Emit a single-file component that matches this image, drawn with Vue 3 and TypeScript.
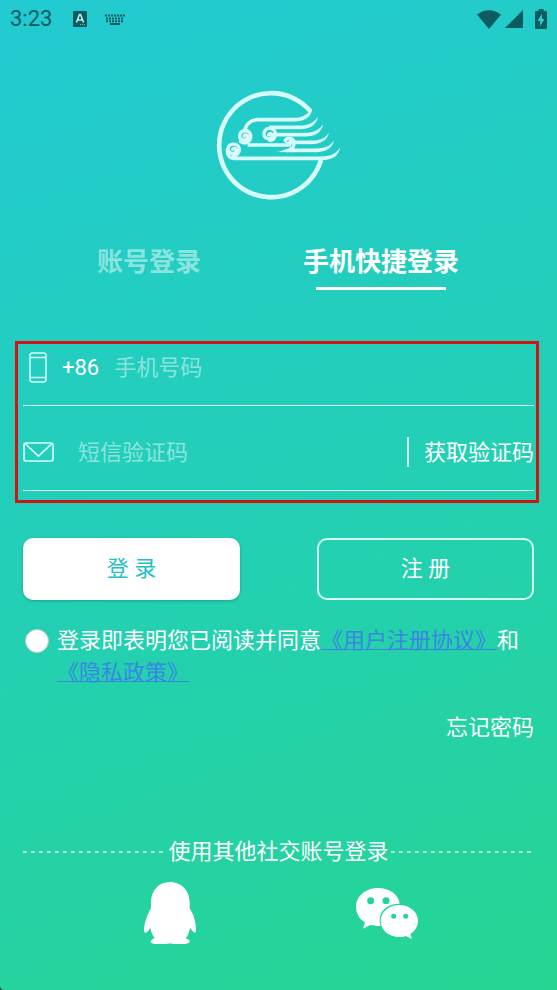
<script setup lang="ts">
import { ref } from 'vue'

type LoginMode = 'account' | 'phone'

const mode = ref<LoginMode>('phone')
const tabs: { id: LoginMode; label: string }[] = [
  { id: 'account', label: '账号登录' },
  { id: 'phone', label: '手机快捷登录' },
]
const phone = ref('')
const code = ref('')
const agreed = ref(false)
</script>

<template>
  <div class="screen">
    <header class="status">
      <div class="status-group">
        <time class="clock">3:23</time>
        <svg class="badge-a" width="14" height="16" viewBox="0 0 14 16" aria-hidden="true">
          <rect width="14" height="16" rx="1" fill="currentColor" />
          <path d="M3.5 11.5 6.4 3.5h1.2l2.9 8M4.6 9h4.8" fill="none" stroke="#b9eff2" stroke-width="1.6" />
          <path d="M7 13.7h5" stroke="#7fdde0" stroke-width="1" stroke-dasharray="1 1" />
        </svg>
        <svg width="20" height="11" viewBox="0 0 20 11" aria-hidden="true">
          <g stroke="currentColor" stroke-width="2">
            <path d="M0 1.5h20" stroke-dasharray="2 1" />
            <path d="M1 4.5h18" stroke-dasharray="2 1" />
            <path d="M1 7.2h18" stroke-dasharray="2 1" />
            <path d="M5 10h10" />
          </g>
        </svg>
      </div>
      <div class="status-group status-right">
        <svg width="24" height="19" viewBox="0 0 24 19" aria-hidden="true">
          <path d="M0 4.5Q12-4 24 4.5L12 19Z" fill="currentColor" />
        </svg>
        <svg width="18" height="18" viewBox="0 0 18 18" aria-hidden="true">
          <path d="M18 0v18H0Z" fill="currentColor" />
        </svg>
        <svg class="battery" width="12" height="20" viewBox="0 0 12 20" aria-hidden="true">
          <path d="M3.5 0h5v2H11q1 0 1 1v16q0 1-1 1H1q-1 0-1-1V3q0-1 1-1h2.500Z" fill="currentColor" />
          <path d="M7 5 2.500 11.800h2.700V17L9.500 10H7Z" fill="#35cfcf" />
        </svg>
      </div>
    </header>

    <main class="content">
      <svg class="logo" width="147" height="130" viewBox="0 0 441 390" role="img" aria-label="Logo">
        <path d="M316 96A156 156 0 1 0 348 243" fill="none" stroke="currentColor" stroke-width="14" />
        <g fill="none" stroke="currentColor" stroke-width="11">
          <path d="M119 158C121 138 135 123 158 122H270" />
          <path d="M192 145H282" />
          <path d="M205 167H300" />
          <path d="M268 190H317" />
          <path d="M256 214H332" />
          <path d="M86 238H351" />
          <path d="M128 198H258" />
        </g>
        <g fill="none" stroke="currentColor" stroke-width="10" stroke-linecap="round">
          <path d="M117 171C121 164 130 169 127 177C122 188 103 184 104 170C106 151 133 150 137 169C139 187 122 198 106 187" />
          <path d="M191 168C194 160 204 164 201 173C195 185 176 179 177 164C179 144 206 142 211 162C213 175 205 185 194 184" />
          <path d="M83 211C88 204 97 211 92 219C84 229 68 220 69 208C72 192 97 191 103 208C105 221 95 230 84 231" />
          <path d="M86 238C73 238 66 227 67 212" />
          <path d="M254 191C251 185 258 184 259 190C260 199 247 197 244 189" stroke-width="7" />
          <path d="M240 184C247 175 265 175 267 189C269 203 260 211 248 215" />
        </g>
        <g fill="currentColor">
          <path d="M268 116.500C288 116 300 110 312 98V90L321 94C317 116 296 128 268 127.500Z" />
          <path d="M280 139.500C310 140 328 131 339 113C333 139 315 151 280 150.500Z" />
          <path d="M298 161.500C326 162 344 153 355 135C349 161 331 173 298 172.500Z" />
          <path d="M315 184.500C343 185 361 178 372 161C366 184 348 196 315 195.500Z" />
          <path d="M330 208.500C358 209 376 202 387 184C382 208 363 220 330 219.500Z" />
          <path d="M349 232.500C376 233 394 224 406 205C400 232 382 244 349 243.500Z" />
          <path d="M216 219C231 217 240 211 251 208.500H270V219.500Z" />
        </g>
      </svg>

      <nav class="tabs">
        <button
          v-for="tab in tabs"
          :key="tab.id"
          type="button"
          class="tab"
          :class="{ active: mode === tab.id }"
          @click="mode = tab.id"
        >
          {{ tab.label }}
        </button>
      </nav>

      <form @submit.prevent>
        <div class="fields">
          <div class="field field-phone">
            <label class="phone-icon" for="phone" aria-label="手机号码">
              <svg width="18" height="31" viewBox="0 0 18 31" fill="none" stroke="currentColor" stroke-width="1.5">
                <rect x="1" y="1" width="16" height="29" rx="2.500" />
                <path d="M1 5.500h16M1 25.500h16" />
              </svg>
            </label>
            <span class="prefix">+86</span>
            <input id="phone" v-model="phone" type="tel" placeholder="手机号码" />
          </div>
          <div class="field field-code">
            <label class="mail-icon" for="code" aria-label="短信验证码">
              <svg width="31" height="20" viewBox="0 0 31 20" fill="none" stroke="currentColor" stroke-width="1.700">
                <rect x="1" y="1" width="29" height="18" rx="2" />
                <path d="M2 1.500 15.500 14 29 1.500" />
              </svg>
            </label>
            <input id="code" v-model="code" type="text" placeholder="短信验证码" />
            <button type="button" class="send">获取验证码</button>
          </div>
        </div>

        <div class="actions">
          <button type="submit" class="action primary">登 录</button>
          <button type="button" class="action outline">注 册</button>
        </div>

        <div class="agreement">
          <input id="agree" v-model="agreed" type="checkbox" />
          <p>
            <label for="agree">登录即表明您已阅读并同意</label><a href="#terms">《用户注册协议》</a>和<br />
            <a href="#privacy">《隐私政策》</a>
          </p>
        </div>

        <a class="forgot" href="#forgot">忘记密码</a>
      </form>

      <section class="social">
        <h2 class="social-title">使用其他社交账号登录</h2>
        <div class="social-links">
          <button type="button" aria-label="QQ">
            <svg width="52" height="62" viewBox="0 0 156 186" fill="currentColor">
              <path d="M78 0C112 0 137 26 137 62V79C148 96 157 122 156 145C155 156 149 154 139 138C136 151 131 161 125 169C134 172 138 176 137 181C134 188 94 188 78 184C62 188 22 188 20 181C19 176 24 171 32 169C26 160 21 150 19 138C9 154 2 156 0 146C0 122 11 96 21 79V62C21 26 44 0 78 0Z" />
            </svg>
          </button>
          <button type="button" aria-label="微信">
            <svg width="62" height="51" viewBox="0 0 186 153" fill="currentColor">
              <path
                fill-rule="evenodd"
                d="M65 0C103 0 128 21 131 47C98 46 71 66 71 97C71 104 72 109 74 113C62 115 51 113 43 111L21 122L27 103C10 93 0 76 0 57C0 25 30 0 65 0ZM44 28A10.500 10.500 0 1 0 44 49A10.500 10.500 0 1 0 44 28ZM90 28A10.500 10.500 0 1 0 90 49A10.500 10.500 0 1 0 90 28Z"
              />
              <path
                fill-rule="evenodd"
                d="M130 51C162 51 186 72 186 99C186 115 177 129 163 138L168 153L149 144C143 147 137 147 130 147C98 147 74 126 74 99C74 72 98 51 130 51ZM113 77A7.500 7.500 0 1 0 113 92A7.500 7.500 0 1 0 113 77ZM149 77A7.500 7.500 0 1 0 149 92A7.500 7.500 0 1 0 149 77Z"
              />
            </svg>
          </button>
        </div>
      </section>
    </main>
  </div>
</template>

<style>
body {
  margin: 0;
  background: #06302f;
}
</style>

<style scoped>
.screen {
  box-sizing: border-box;
  min-height: 100vh;
  border-bottom-left-radius: 4px;
  background: linear-gradient(160deg, #22cad2 0%, #23cfb9 45%, #25d592 100%);
  color: #fff;
  font-family: Roboto, 'Noto Sans CJK SC', sans-serif;
  font-size: 22px;
  line-height: 32px;
}

button,
input {
  margin: 0;
  padding: 0;
  border: 0;
  background: none;
  color: inherit;
  font: inherit;
}

button {
  cursor: pointer;
}

svg {
  display: block;
}

.status {
  display: flex;
  align-items: center;
  justify-content: space-between;
  height: 38px;
  padding: 0 10px;
  color: #0b5c60;
}

.status-group {
  display: flex;
  align-items: center;
}

.clock {
  margin-right: 21px;
}

.badge-a {
  margin-right: 18px;
}

.status-right {
  gap: 4px;
}

.battery {
  margin-left: 8px;
}

.content {
  display: flex;
  flex-direction: column;
  padding: 41px 23px 0;
}

.logo {
  align-self: center;
  color: #d8fbfc;
}

.tabs {
  display: grid;
  grid-template-columns: 1fr 1fr;
  margin-top: 35px;
  padding: 0 37px 0 10px;
}

.tab {
  display: flex;
  flex-direction: column;
  align-items: center;
  gap: 7px;
  color: rgba(255, 255, 255, 0.48);
  font-size: 26px;
  font-weight: 700;
  line-height: 36px;
}

.tab::after {
  content: '';
  width: 130px;
  height: 3px;
}

.tab.active {
  color: #fff;
}

.tab.active::after {
  background: #fff;
}

.fields {
  margin: 51px -5px 0 -8px;
  padding: 0 2px 9px 5px;
  border: 3px solid #d01414;
}

.field {
  display: flex;
  align-items: center;
  height: 46px;
  padding-bottom: 15px;
  border-bottom: 1px solid #e0fbf5;
}

.field-code {
  padding-top: 23px;
}

.phone-icon,
.mail-icon {
  flex: none;
  color: #d8fbf6;
}

.phone-icon {
  margin: 0 15px 0 6px;
}

.mail-icon {
  margin-right: 24px;
}

.prefix {
  flex: none;
  margin-right: 15px;
  padding-top: 2px;
}

.field input {
  flex: 1;
  min-width: 0;
  padding-top: 2px;
  outline: none;
}

.field input::placeholder {
  color: rgba(255, 255, 255, 0.48);
  opacity: 1;
}

.send {
  flex: none;
  padding: 2px 0 0 15px;
  border-left: 2px solid #d8fbf0;
  line-height: 28px;
}

.actions {
  display: flex;
  justify-content: space-between;
  margin-top: 35px;
}

.action {
  box-sizing: border-box;
  width: 42.5%;
  height: 62px;
  border-radius: 10px;
}

.primary {
  background: #fff;
  box-shadow: 0 1px 3px rgba(0, 80, 70, 0.35);
  color: #25bfc9;
}

.outline {
  border: 2px solid #d8fbf0;
}

.agreement {
  display: flex;
  align-items: flex-start;
  gap: 8px;
  margin-top: 25px;
}

.agreement input {
  flex: none;
  box-sizing: border-box;
  width: 24px;
  height: 24px;
  margin: 4px 0 0 2px;
  border: 1px solid #b5ccc6;
  border-radius: 50%;
  background: #fff;
  appearance: none;
}

.agreement input:checked {
  border: 7px solid #fff;
  background: #25bfc9;
}

.agreement p {
  margin: 0;
}

.agreement a {
  color: #3a86e2;
  text-decoration: underline;
  text-decoration-thickness: 1px;
  text-underline-offset: 1px;
}

.forgot {
  display: block;
  width: fit-content;
  margin: 23px 0 0 auto;
  color: #fff;
  text-decoration: none;
}

.social {
  margin-top: 92px;
}

.social-title {
  display: flex;
  align-items: center;
  gap: 2px;
  margin: 0;
  font-size: 22px;
  font-weight: 400;
}

.social-title::before,
.social-title::after {
  content: '';
  flex: 1;
  height: 2px;
  background: repeating-linear-gradient(90deg, #a5efd4 0 4px, transparent 4px 8px);
}

.social-links {
  display: grid;
  grid-template-columns: 1fr 1fr;
  align-items: center;
  justify-items: center;
  margin-top: 14px;
  padding: 0 38px;
}
</style>
